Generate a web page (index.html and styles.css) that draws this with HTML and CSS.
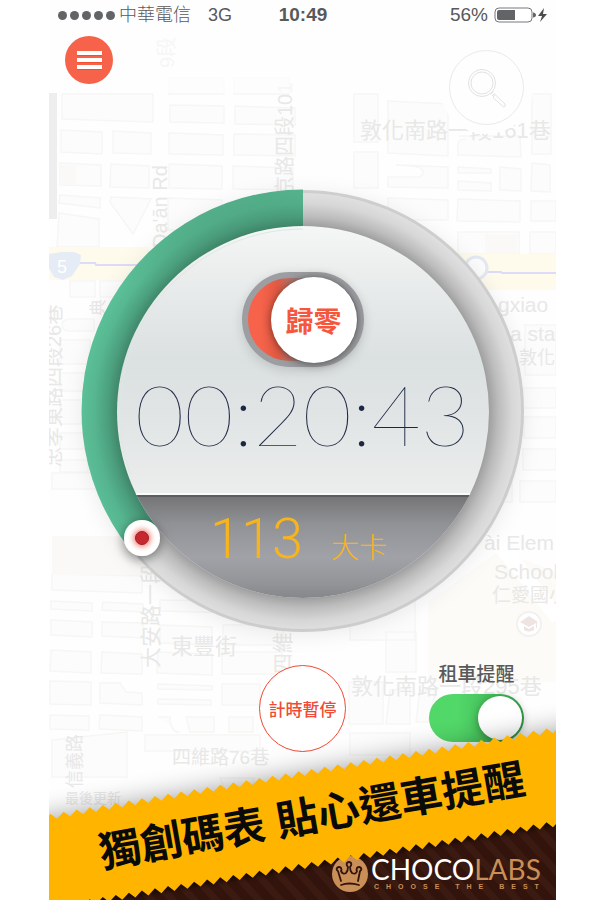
FILE: index.html
```html
<!DOCTYPE html>
<html lang="zh-Hant">
<head>
<meta charset="utf-8">
<meta name="viewport" content="width=device-width, initial-scale=1">
<title>獨創碼表 貼心還車提醒</title>
<link rel="stylesheet" href="styles.css">
</head>
<body>
<main class="screen">
  <svg class="map" viewBox="49 0 507 900" preserveAspectRatio="xMidYMin slice" aria-hidden="true">
    <rect class="map-strip" x="49" y="93" width="8" height="126"/>
    <g class="map-blocks">
      <path d="M62 94h91v28l-91-3zM61 130l41 2v22l-41-2zM113 131l38 2v21l-38-1zM169 78h55v16h-55zM170 105l54 1v17l-54-1zM169 133l54 2v20l-54-1zM169 164l53 2v23l-53-1zM234 78h55v16h-55zM235 106l60 2v17l-60-1zM234 134l61 1v21l-61-1zM233 166l60 2v22l-60-1zM60 163l41 2v21l-41-1zM111 164l38 2v22l-39-1zM60 195l40 3v10l-41-5zM111 197l40 2-18 35-23-32zM59 213l40 6v28h-42zM168 198l54 2v30h-54z"/>
      <path d="M354 94h24v48h-24zM388 101l60 3v52l-60-3zM459 136h61l1 21-63-2v-10q0-6 8-6M354 152h24v36h-24zM396 165l52 2v21l-60-1v-10h30q6-1 5-6-3-5-12-5zM458 167l33 2v4h-33zM458 181l33 2v8l-33-1zM500 167l21 2v22l-21-1zM532 94h19v60h-19zM532 163l18 2v27l-19-1zM388 198l60 2v20h-60zM458 199l62 2v21l-63-1zM531 201h25v20h-25zM458 232h61v22h-61zM530 232h26v22h-26z"/>
      <path d="M70 281h25v16H70zM100 281h25v16h-25zM62 325q0-7 12-6h20v12H70q-8 0-8-6zM60 340h30v24H60zM60 373h25v18H60zM60 400h24v24H60zM60 433h25v16H60zM60 460h28v12H60zM52 473h45l8 16H52zM525 325h31v50h-31zM523 388h33v20h-33zM524 417h32v21h-32zM523 449h33v21h-33zM520 481h36v21h-36zM490 480h22v22h-22z"/>
      <path d="M52 574l90 2v17l-90-3zM51 601l41 2v8l-41-2zM103 602l40 2v8l-41-2zM51 620l41 2v15l-41-2zM102 622l41 1v15l-41-2zM160 625l52 2v18l-52-2zM160 600l80 1v12l-80-2zM223 625h60v20h-60zM51 650l40 2v21l-41-2zM102 652l40 2v20l-41-1zM158 652l54 2v21l-55-2zM222 652h60v22h-60zM50 681l41 1v23l-41-1zM100 683h20l6 9 16 1v12l-42-2zM158 684l54 2v4l-54-1zM158 699l53 1v5l-53-1zM222 684h38v21h-38zM50 715l39 1v14l-39-1zM100 715l42 2v14l-43-2zM158 717h12q0 16 10 15M186 717h28v15h-24zM229 717h24v15h-24zM52 740l75-8v45H52zM145 735h115v16H145zM350 600h65v40h-65zM386 632h30v40h-30zM349 682h34v42h-34zM390 690l20-2v36h-24zM420 690h16l-8 32h-12zM350 733h60v22h-60zM220 778h34v14h-28z"/>
    </g>
    <path class="map-park" d="M428 602l72-52 56 22v110H428z"/>
    <path class="map-plaza" d="M52 536h85l30 24v15H52zM60 165h16v20H60zM485 234h32v19h-32z"/>
    <path class="map-road" d="M49 247h100v33H49zM440 254h116v36H440z"/>
    <path class="map-metro" d="M78 263h17l1 2h54M480 272h21l1 1h54"/>
    <path class="map-shield" d="M49 254l12-2h13l7 3-1 9-8 12-9 4-9-3-5-9z"/>
    <circle class="map-station" cx="476" cy="268" r="11"/>
    <path class="map-street" d="M484 530l72 90M510 552l46 60"/>
    <g class="map-text">
      <text class="map-sign" x="57" y="273">5</text>
      <text x="360" y="138" font-size="22">敦化南路一段161巷</text>
      <text font-size="20" transform="translate(292 196) rotate(-90)">京路四段101</text>
      <text font-size="20" transform="translate(174 68) rotate(-90)">9段</text>
      <text font-size="20" transform="translate(167 248) rotate(-90)">Da'ān Rd</text>
      <text font-size="20" transform="translate(61 467) rotate(-90)">忠孝東路四段26巷</text>
      <text font-size="17" transform="translate(104 316) rotate(-90)">典</text>
      <text x="498" y="312" font-size="21">gxiao</text>
      <text x="510" y="341" font-size="21">a sta</text>
      <text x="519" y="364" font-size="18">敦化</text>
      <text x="484" y="550" font-size="21">ài Elem</text>
      <text x="494" y="579" font-size="21">School</text>
      <text x="492" y="602" font-size="19">仁愛國小</text>
      <text x="171" y="654" font-size="22">東豐街</text>
      <text font-size="21" transform="translate(158 668) rotate(-90)">大安路一段</text>
      <text font-size="21" transform="translate(290 674) rotate(-90)">四維路</text>
      <text x="351" y="694" font-size="22">敦化南路一段295巷</text>
      <text x="172" y="764" font-size="19">四維路76巷</text>
      <text font-size="18" transform="translate(81 788) rotate(-90)">信義路</text>
      <text x="65" y="803" font-size="14">最後更新</text>
    </g>
    <g class="map-school">
      <circle cx="529" cy="624" r="12"/>
      <path d="M520 622l9-6 9 6-9 5zM524 626v4q5 3 10 0v-4l-5 3zM537 622v6h-1v-6z"/>
    </g>
  </svg>

  <header class="top">
    <div class="status">
      <div class="status-left">
        <span class="signal" aria-hidden="true"><i></i><i></i><i></i><i></i><i></i></span>
        <span class="carrier">中華電信</span>
        <span class="network">3G</span>
      </div>
      <time class="clock">10:49</time>
      <div class="status-right">
        <span>56%</span>
        <svg class="battery" viewBox="0 0 54 16" aria-hidden="true">
          <rect x="1" y="1" width="37" height="14" rx="4" fill="#fff" stroke="#77787b"/>
          <path d="M5 3h16v10H5q-2 0-2-2V5q0-2 2-2z" fill="#636467"/>
          <path d="M39 5.500q3 .5 3 2.500t-3 2.500z" fill="#636467"/>
          <path d="M50 1l-6 8h4l-2 6 7-8h-4z" fill="#4b4c4f"/>
        </svg>
      </div>
    </div>
    <nav class="nav">
      <button class="menu" type="button" aria-label="選單"><span></span><span></span><span></span></button>
      <button class="search" type="button" aria-label="搜尋">
        <svg viewBox="0 0 40 40" aria-hidden="true">
          <circle cx="15" cy="15" r="13.500"/>
          <circle cx="15" cy="15" r="11"/>
          <path d="M23.500 26.500l3-3M25 28l3-3M26.500 30q-.5-2 1.500-3.500l10 9.500q1 2.500-1.500 3z"/>
        </svg>
      </button>
    </nav>
  </header>

  <section class="dial" aria-label="碼表">
    <svg class="dial-art" viewBox="0 0 444 444" aria-hidden="true">
      <defs>
        <linearGradient id="face" x1="0" y1="0" x2="0" y2="1">
          <stop offset="0" stop-color="#f5f6f6"/>
          <stop offset=".12" stop-color="#eceeee"/>
          <stop offset=".36" stop-color="#dbe0e0"/>
          <stop offset=".5" stop-color="#e0e4e4"/>
          <stop offset=".73" stop-color="#eceeed"/>
        </linearGradient>
        <linearGradient id="base" gradientUnits="userSpaceOnUse" x1="0" y1="306" x2="0" y2="410">
          <stop offset="0" stop-color="#737375"/>
          <stop offset=".28" stop-color="#919296"/>
          <stop offset=".6" stop-color="#a1a2a7"/>
          <stop offset=".85" stop-color="#939498"/>
          <stop offset="1" stop-color="#858688"/>
        </linearGradient>
        <linearGradient id="green" x1="0" y1="0" x2=".2" y2="1">
          <stop offset="0" stop-color="#489876"/>
          <stop offset=".3" stop-color="#5bc198"/>
          <stop offset="1" stop-color="#5abd96"/>
        </linearGradient>
        <radialGradient id="inner" gradientUnits="userSpaceOnUse" cx="222" cy="223" r="222">
          <stop offset=".83" stop-color="#000" stop-opacity=".32"/>
          <stop offset=".88" stop-color="#000" stop-opacity=".17"/>
          <stop offset=".94" stop-color="#000" stop-opacity=".05"/>
          <stop offset="1" stop-color="#000" stop-opacity="0"/>
        </radialGradient>
        <radialGradient id="core">
          <stop offset="0" stop-color="#e86058"/>
          <stop offset=".45" stop-color="#f3a29a"/>
          <stop offset="1" stop-color="#fff" stop-opacity="0"/>
        </radialGradient>
        <clipPath id="disc"><circle cx="222" cy="223" r="186"/></clipPath>
        <filter id="soft" x="-50%" y="-50%" width="200%" height="200%"><feDropShadow dx="0" dy="3" stdDeviation="6" flood-opacity=".5"/></filter>
      </defs>
      <circle cx="222" cy="222" r="221" fill="#cfcfcf"/>
      <circle cx="222" cy="222" r="218" fill="#e2e2e2"/>
      <path d="M222 222V0.500A221.500 221.500 0 0 0 48 359z" fill="url(#green)"/>
      <circle cx="222" cy="222" r="221" fill="url(#inner)"/>
      <g clip-path="url(#disc)">
        <rect x="35" y="36" width="374" height="374" fill="url(#face)"/>
        <rect x="35" y="304" width="374" height="2" fill="#fafafa"/>
        <rect x="35" y="306" width="374" height="106" fill="url(#base)"/>
        <rect x="35" y="306" width="374" height="2" fill="#5c5d5f"/>
      </g>
      <path d="M50 286A183 183 0 0 1 222 40" fill="none" stroke="#dce9e4" stroke-width="1"/>
      <circle cx="61" cy="349" r="18" fill="#fff" filter="url(#soft)"/>
      <circle cx="61" cy="349" r="15" fill="url(#core)"/>
      <circle cx="61" cy="349" r="6.500" fill="#c6282f" stroke="#a92028"/>
    </svg>
    <button class="reset" type="button"><span>歸零</span></button>
    <time class="elapsed">00:20:43</time>
    <p class="calories"><span class="amount">113</span><span class="unit">大卡</span></p>
  </section>

  <section class="actions">
    <button class="pause" type="button">計時暫停</button>
    <div class="reminder">
      <label for="remind">租車提醒</label>
      <input id="remind" class="toggle" type="checkbox" role="switch" checked>
    </div>
  </section>

  <footer class="promo">
    <svg viewBox="0 0 507 180" role="img" aria-label="獨創碼表 貼心還車提醒 CHOCOLABS">
      <defs>
        <pattern id="stripes" width="16" height="16" patternUnits="userSpaceOnUse" patternTransform="rotate(-42)">
          <rect width="16" height="16" fill="#32140c"/><rect width="7" height="16" fill="#3a1a11"/>
        </pattern>
        <filter id="lift" filterUnits="userSpaceOnUse" x="-60" y="-80" width="640" height="320"><feGaussianBlur stdDeviation="14"/></filter>
        <filter id="edge" filterUnits="userSpaceOnUse" x="-20" y="0" width="560" height="220"><feGaussianBlur stdDeviation="2"/></filter>
      </defs>
      <path d="M-60 110L567 2V180H-60z" fill="#000" opacity=".42" filter="url(#lift)"/>
      <path d="M0 165L507 80V180H0z" fill="url(#stripes)"/>
      <path d="M0 191L507 106V80L0 165z" fill="#000" opacity=".5" filter="url(#edge)"/>
      <circle cx="301" cy="154" r="18" fill="#c98f57"/>
      <g fill="none" stroke="#32140c" stroke-width="1.800" stroke-linecap="round" stroke-linejoin="round">
        <path d="M292 165q8-3 18 0M292 161l-3-10q-2-1-1-3 2-2 4 0 1 2 0 3 2 4 5 2 2-2 2-6-2-2-1-4 2-2 4 0 1 2-1 4 0 4 2 6 4 2 5-2-1-1 0-3 2-2 4 0 1 2-1 3l-2 10"/>
      </g>
      <path id="tape" fill="#ffb400"/>
      <text class="slogan" transform="translate(53 148) rotate(-10)">獨創碼表 貼心還車提醒</text>
      <text class="brand" x="322" y="160">CHOCO<tspan class="brand-alt">LABS</tspan></text>
      <text class="tagline" x="325" y="169">CHOOSE THE BEST</text>
    </svg>
  </footer>
</main>
<script src="tape.js"></script>
</body>
</html>
```
FILE: styles.css
```css
* { box-sizing: border-box; }
body {
  margin: 0;
  background: #fff;
  color: #58595b;
  font-family: "Liberation Sans", "Noto Sans CJK TC", sans-serif;
}
button { padding: 0; border: 0; font: inherit; cursor: pointer; }
.screen {
  position: relative;
  margin: 0 51px 0 49px;
  overflow: hidden;
  background: #fefefe;
}
.map { position: absolute; inset: 0; width: 100%; height: 100%; }
.map-strip { fill: #eee; }
.map-blocks { fill: #fcfcfc; stroke: #f6f6f5; stroke-width: 1.5; }
.map-park { fill: #fcfbf7; }
.map-plaza { fill: #faf9f7; }
.map-road { fill: #fefaec; }
.map-metro { fill: none; stroke: #dcdcf8; stroke-width: 2; }
.map-shield { fill: #e6ecf6; }
.map-station { fill: #fbfcfb; stroke: #e3e9f2; stroke-width: 3; }
.map-street { fill: none; stroke: #fff; stroke-width: 9; }
.map-text { fill: #e8e8e7; }
.map-text .map-sign { fill: #fff; font-size: 18px; }
.map-school circle { fill: #fff; stroke: #f3f1ef; stroke-width: 2; }
.map-school path { fill: #eee5e2; }

.top { position: relative; }
.top::before {
  content: "";
  position: absolute;
  inset: 0;
  background: rgba(254, 254, 254, 0.65);
}
.status {
  position: relative;
  display: grid;
  grid-template-columns: 1fr auto 1fr;
  align-items: center;
  height: 30px;
  padding: 0 8px 0 9px;
  font-size: 19px;
  line-height: 30px;
}
.status-left, .status-right { display: flex; align-items: center; }
.status-right { justify-content: flex-end; gap: 6px; }
.signal { display: flex; gap: 3px; margin-right: 4px; }
.signal i { width: 9px; height: 9px; border-radius: 50%; background: #636467; }
.carrier { font-size: 18px; font-weight: 300; }
.network { margin-left: 17px; font-size: 18px; }
.clock { font-weight: 700; }
.battery { width: 54px; height: 16px; }
.nav {
  position: relative;
  display: flex;
  justify-content: space-between;
  align-items: flex-start;
  height: 63px;
  padding: 6px 32px 0 16px;
}
.menu {
  display: flex;
  flex-direction: column;
  align-items: center;
  justify-content: center;
  gap: 3px;
  width: 48px;
  height: 48px;
  border-radius: 50%;
  background: #f6634a;
}
.menu span { width: 25px; height: 4px; background: #fff; box-shadow: 0 1px 0 #f2502f; }
.search {
  display: grid;
  place-items: center;
  width: 75px;
  height: 75px;
  margin-top: 14px;
  border: 1px solid #eaeaea;
  border-radius: 50%;
  background: #fefefe;
  box-shadow: 0 0 0 9px #fefefe;
}
.search svg { width: 40px; height: 40px; fill: none; stroke: #e2e2e2; }

.dial {
  position: relative;
  display: flex;
  flex-direction: column;
  align-items: center;
  width: 444px;
  max-width: 100%;
  min-height: 444px;
  margin: 96px auto 0;
  padding-top: 83px;
}
.dial-art {
  position: absolute;
  inset: 0;
  width: 100%;
  height: 100%;
  border-radius: 50%;
  overflow: visible;
  filter: drop-shadow(0 3px 10px rgba(0, 0, 0, 0.08));
}
.reset {
  position: relative;
  display: flex;
  justify-content: flex-end;
  align-items: center;
  width: 122px;
  height: 95px;
  padding-right: 1px;
  border: 6px solid #9c9ea1;
  border-radius: 48px;
  background: linear-gradient(90deg, #f6634a 12px, #e25a43 30px, #8d8e91 50%);
  box-shadow: 0 3px 12px rgba(0, 0, 0, 0.14);
}
.reset span {
  display: grid;
  place-items: center;
  width: 86px;
  height: 86px;
  flex: none;
  border-radius: 50%;
  background: #fff;
  box-shadow: 0 1px 8px rgba(0, 0, 0, 0.5);
  color: #f6563c;
  font-size: 28px;
  font-weight: 700;
}
.elapsed {
  position: relative;
  margin-top: 2px;
  color: #1d2744;
  font-family: Lato, Inter, sans-serif;
  font-size: 85px;
  font-weight: 100;
  line-height: 88px;
  white-space: nowrap;
}
.calories {
  position: relative;
  display: flex;
  align-items: baseline;
  gap: 28px;
  margin: 46px 0 0;
  padding-right: 8px;
  color: #f8b41c;
  line-height: 72px;
}
.amount { font-family: Roboto, sans-serif; font-size: 56px; font-weight: 300; }
.unit { font-size: 28px; font-weight: 300; }

.actions {
  position: relative;
  display: grid;
  grid-template-columns: 1fr auto 1fr;
  align-items: start;
  margin-top: 32px;
  padding: 0 32px;
}
.pause {
  grid-column: 2;
  width: 87px;
  height: 87px;
  border: 1px solid #f04a34;
  border-radius: 50%;
  background: #fff;
  color: #f04a34;
  font-size: 17px;
  font-weight: 500;
}
.reminder { display: grid; justify-items: center; justify-self: end; }
.reminder label { font-size: 19px; font-weight: 500; line-height: 20px; }
.toggle {
  appearance: none;
  display: flex;
  justify-content: flex-start;
  align-items: center;
  width: 95px;
  height: 48px;
  margin: 9px 0 0;
  padding: 0 2px;
  border-radius: 24px;
  background: #ccc;
  cursor: pointer;
}
.toggle:checked {
  justify-content: flex-end;
  background: linear-gradient(90deg, #52d769 30%, #38a94c);
}
.toggle::before {
  content: "";
  width: 44px;
  height: 44px;
  border-radius: 50%;
  background: #fff;
  box-shadow: 0 2px 10px rgba(0, 0, 0, 0.35);
}

.promo { position: relative; margin-top: -32px; pointer-events: none; }
.promo svg { display: block; width: 100%; overflow: visible; }
.slogan { fill: #0a0a0a; font-size: 42px; font-weight: 700; }
.brand { fill: #fff; font-family: Lato, sans-serif; font-size: 28px; }
.brand-alt { fill: #c98f57; }
.tagline { fill: #c98f57; font-size: 7px; font-weight: 700; letter-spacing: 7px; }
```
FILE: tape.js
```js
// Zigzag outline of the yellow tape, cut along two slanted edges.
const zigzag = (x0, y0, x1, y1, teeth) => {
  const points = [];
  for (let i = 0; i <= teeth * 2; i++) {
    const t = i / (teeth * 2);
    const dy = i % 2 ? -3 : 3;
    points.push(`${x0 + (x1 - x0) * t} ${y0 + (y1 - y0) * t + dy}`);
  }
  return points;
};
const upperEdge = zigzag(-5, 98, 517, 8, 40);
const lowerEdge = zigzag(517, 102, -5, 190, 40);
document.getElementById("tape").setAttribute("d", `M${[...upperEdge, ...lowerEdge].join("L")}Z`);
```
